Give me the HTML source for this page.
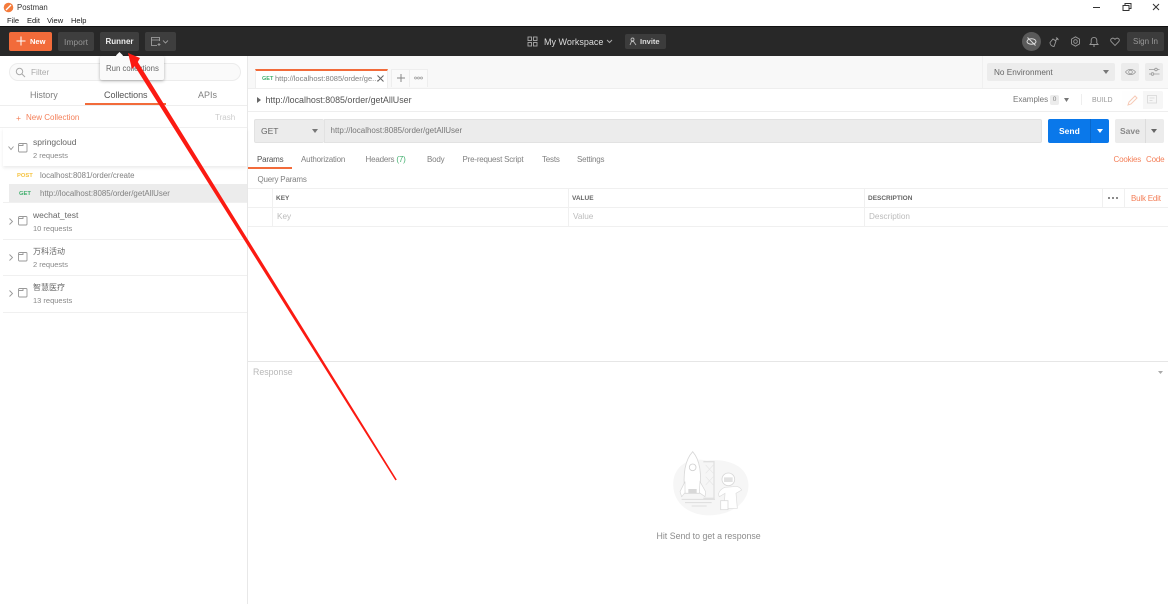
<!DOCTYPE html>
<html><head><meta charset="utf-8"><style>
html,body{margin:0;padding:0;background:#fff}
#r{position:relative;width:1168px;height:604px;overflow:hidden;background:#fff;font-family:"Liberation Sans","Noto Sans CJK SC",sans-serif;font-size:8px;color:#808080}
#r div{position:absolute;white-space:nowrap;box-sizing:border-box}
.b{border-radius:2px}
.l{background:#ececec}
.sep{background:#f0f0f0;height:1px}
.t{font-size:8px;letter-spacing:-.2px;color:#808080}
.o{font-size:8px;letter-spacing:-.2px;color:#f4805a}
svg{position:absolute;overflow:visible}
</style></head><body><div id="r">

<svg style="left:3px;top:2px" width="11" height="11" viewBox="0 0 11 11"><circle cx="5.500" cy="5.500" r="4.800" fill="#f47b3c"/><path d="M3 8L8 3" stroke="#fff" stroke-width="1.300"/></svg>
<div style="left:17px;top:2.500px;font-size:7.800px;color:#333">Postman</div>
<div style="left:7px;top:15.500px;font-size:7.500px;color:#222">File</div>
<div style="left:27px;top:15.500px;font-size:7.500px;color:#222">Edit</div>
<div style="left:47px;top:15.500px;font-size:7.500px;color:#222">View</div>
<div style="left:71px;top:15.500px;font-size:7.500px;color:#222">Help</div>
<svg style="left:1095px;top:2px" width="70" height="10" fill="none" stroke="#333"><path d="M-2 5.500H5"/><path d="M28 3.500h6v5h-6zM30 3.500v-2h6v5h-2"/><path d="M58 2l6 6M64 2l-6 6"/></svg>

<div style="left:0;top:26px;width:1168px;height:30px;background:#282828;border-top:1px solid #111"></div>
<div class="b" style="left:9px;top:32px;width:43px;height:19px;background:#f26b3a"></div>
<svg style="left:16px;top:36px" width="10" height="10" stroke="#fff" stroke-width="1"><path d="M5 0.500V9.500M0.500 5H9.500"/></svg>
<div style="left:30px;top:37px;color:#fff;font-weight:bold;font-size:7.500px">New</div>
<div class="b" style="left:58px;top:32px;width:36px;height:19px;background:#3e3e3e;color:#949494;text-align:center;line-height:20px;font-size:8.500px">Import</div>
<div class="b" style="left:100px;top:32px;width:39px;height:19px;background:#3e3e3e;color:#eee;text-align:center;line-height:20px;font-weight:bold;font-size:8px">Runner</div>
<div class="b" style="left:145px;top:32px;width:31px;height:19px;background:#3e3e3e"></div>
<svg style="left:151px;top:37px" width="20" height="10" fill="none" stroke="#aaa" stroke-width=".8"><path d="M6 8.500H.5V.5h8V4M.5 3h8M8 6v3M6.500 7.500h3"/><path d="M12 3.500l2.500 2.500 2.500-2.500" /></svg>

<svg style="left:527px;top:36px" width="11" height="11" fill="none" stroke="#aaa" stroke-width=".9"><rect x="1" y="1" width="3.500" height="3.500"/><rect x="6.500" y="1" width="3.500" height="3.500"/><rect x="1" y="6.500" width="3.500" height="3.500"/><rect x="6.500" y="6.500" width="3.500" height="3.500"/></svg>
<div style="left:544px;top:36.500px;color:#ddd;font-size:9px">My Workspace</div>
<svg style="left:606px;top:39px" width="8" height="5" fill="none" stroke="#aaa"><path d="M1 1l2.500 2.500L6 1"/></svg>
<div class="b" style="left:625px;top:34px;width:41px;height:15px;background:#3c3c3c"></div>
<svg style="left:629px;top:37px" width="8" height="9" fill="none" stroke="#bbb" stroke-width=".9"><circle cx="3.500" cy="2.500" r="1.500"/><path d="M1 8l1.500-3.500h2L7 8"/></svg>
<div style="left:640px;top:37px;color:#ddd;font-weight:bold;font-size:7.500px">Invite</div>

<div style="left:1022px;top:32px;width:19px;height:19px;border-radius:50%;background:#5a5a5a"></div>
<svg style="left:1026px;top:36px" width="11" height="11" fill="none" stroke="#ddd"><ellipse cx="5.500" cy="5.500" rx="4.500" ry="2.800"/><path d="M1.500 1.500l8 8"/></svg>
<svg style="left:1049px;top:36px" width="11" height="11" fill="none" stroke="#999" stroke-width=".9"><path d="M1 6.500A4 4 0 0 0 5 10.500L7 5 4 3zM6 5l3-3M7 1.500l2.500 2.500"/></svg>
<svg style="left:1070px;top:36px" width="11" height="11" fill="none" stroke="#999" stroke-width=".9"><path d="M5.500.8l4 2.300v4.800l-4 2.300-4-2.300V3.100z"/><circle cx="5.500" cy="5.500" r="1.800"/></svg>
<svg style="left:1089px;top:36px" width="10" height="11" fill="none" stroke="#999" stroke-width=".9"><path d="M1 8.500h8L7.800 7V4.200a2.800 2.800 0 0 0-5.600 0V7zM4 10h2"/></svg>
<svg style="left:1110px;top:37px" width="10" height="9" fill="none" stroke="#999" stroke-width=".9"><path d="M5 8.500L1 4.300C-.2 2 2.800-.2 5 2.300 7.200-.2 10.200 2 9 4.300z"/></svg>
<div class="b" style="left:1127px;top:32px;width:37px;height:19px;background:#3c3c3c;color:#999;text-align:center;line-height:20px;font-size:8px">Sign In</div>

<div style="left:0;top:56px;width:1168px;height:32px;background:#f8f8f8"></div>
<div style="left:0;top:56px;width:248px;height:548px;background:#fff;border-right:1px solid #e8e8e8"></div>

<div style="left:9px;top:63px;width:232px;height:18px;border:1px solid #ececec;border-radius:9px;background:#fafafa"></div>
<svg style="left:15px;top:67px" width="11" height="11" fill="none" stroke="#aaa"><circle cx="4.500" cy="4.500" r="3.200"/><path d="M7 7l3 3"/></svg>
<div style="left:31px;top:67.500px;color:#aaa;font-size:8.200px">Filter</div>

<div style="left:30px;top:90px;font-size:9px;letter-spacing:-.05px;color:#808080">History</div>
<div style="left:104px;top:90px;font-size:9px;letter-spacing:-.05px;color:#555">Collections</div>
<div style="left:198px;top:90px;font-size:9px;color:#808080">APIs</div>
<div style="left:85px;top:103px;width:81px;height:2px;background:#f26b3a"></div>
<div style="left:0;top:105px;width:247px;height:1px;background:#eee"></div>
<div style="left:16px;top:112.500px;color:#f4805a;font-size:8.500px">+</div>
<div style="left:26px;top:113px;color:#f4805a;font-size:8px">New Collection</div>
<div style="left:215px;top:113px;color:#ccc;font-size:8px">Trash</div>
<div style="left:0;top:127px;width:247px;height:1px;background:#f0f0f0"></div>

<div style="left:3px;top:128px;width:244px;height:38px;background:#fff;box-shadow:0 2px 3px rgba(0,0,0,.08)"></div>
<svg style="left:8px;top:146px" width="6" height="5" fill="none" stroke="#999" stroke-width=".9"><path d="M.5 .5L3 3.500 5.500 .5"/></svg>
<svg style="left:18px;top:143px" width="10" height="10" fill="none" stroke="#999" stroke-width=".9"><rect x=".5" y=".5" width="8.500" height="8.500" rx="1"/><path d="M.5 2.500h4.500V.5"/></svg>
<div style="left:33px;top:137px;font-size:8.500px;color:#666">springcloud</div>
<div style="left:33px;top:150.500px;font-size:7.500px;color:#888">2 requests</div>

<div style="left:17px;top:172.500px;font-size:5.800px;font-weight:bold;color:#f5c23e">POST</div>
<div style="left:40px;top:171px;font-size:7.800px;color:#808080">localhost:8081/order/create</div>
<div style="left:9px;top:184px;width:238px;height:18px;background:#ececec"></div>
<div style="left:19px;top:190.500px;font-size:5.800px;font-weight:bold;color:#3fae6c">GET</div>
<div style="left:40px;top:189px;font-size:7.900px;color:#808080">http://localhost:8085/order/getAllUser</div>
<div style="left:3px;top:202px;width:244px;height:1px;background:#f0f0f0"></div>

<svg style="left:9px;top:218px" width="5" height="7" fill="none" stroke="#999" stroke-width=".9"><path d="M.5 .5L3.500 3.500 .5 6.500"/></svg>
<svg style="left:18px;top:216px" width="10" height="10" fill="none" stroke="#999" stroke-width=".9"><rect x=".5" y=".5" width="8.500" height="8.500" rx="1"/><path d="M.5 2.500h4.500V.5"/></svg>
<div style="left:33px;top:210px;font-size:8.500px;color:#666">wechat_test</div>
<div style="left:33px;top:223.500px;font-size:7.500px;color:#888">10 requests</div>
<div style="left:3px;top:239px;width:244px;height:1px;background:#f0f0f0"></div>

<svg style="left:9px;top:254px" width="5" height="7" fill="none" stroke="#999" stroke-width=".9"><path d="M.5 .5L3.500 3.500 .5 6.500"/></svg>
<svg style="left:18px;top:252px" width="10" height="10" fill="none" stroke="#999" stroke-width=".9"><rect x=".5" y=".5" width="8.500" height="8.500" rx="1"/><path d="M.5 2.500h4.500V.5"/></svg>
<div style="left:33px;top:245.500px;font-size:8px;color:#666">万科活动</div>
<div style="left:33px;top:259.500px;font-size:7.500px;color:#888">2 requests</div>
<div style="left:3px;top:275px;width:244px;height:1px;background:#f0f0f0"></div>

<svg style="left:9px;top:290px" width="5" height="7" fill="none" stroke="#999" stroke-width=".9"><path d="M.5 .5L3.500 3.500 .5 6.500"/></svg>
<svg style="left:18px;top:288px" width="10" height="10" fill="none" stroke="#999" stroke-width=".9"><rect x=".5" y=".5" width="8.500" height="8.500" rx="1"/><path d="M.5 2.500h4.500V.5"/></svg>
<div style="left:33px;top:282px;font-size:8px;color:#666">智慧医疗</div>
<div style="left:33px;top:295.500px;font-size:7.500px;color:#888">13 requests</div>
<div style="left:3px;top:312px;width:244px;height:1px;background:#f0f0f0"></div>

<div style="left:100px;top:56px;width:64px;height:24px;background:#fafafa;border-radius:2px;box-shadow:0 1px 3px rgba(0,0,0,.3)"></div>
<div style="left:117px;top:53px;width:5px;height:5px;background:#fafafa;transform:rotate(45deg)"></div>
<div style="left:106px;top:63.500px;font-size:7.800px;color:#666">Run collections</div>

<div style="left:255px;top:69px;width:133px;height:19px;background:#fff;border-top:2px solid #f26b3a;border-right:1px solid #eee;border-left:1px solid #eee"></div>
<div style="left:262px;top:75.500px;font-size:5.500px;font-weight:bold;color:#3fae6c">GET</div>
<div style="left:275px;top:74px;font-size:7.500px;color:#808080">http://localhost:8085/order/ge...</div>
<svg style="left:377px;top:75px" width="7" height="7" stroke="#666"><path d="M.5 .5l6 6M6.500 .5l-6 6"/></svg>
<div style="left:391px;top:69px;width:37px;height:18px;border:1px solid #eee;background:#fafafa;border-bottom:0"></div>
<div style="left:409px;top:69px;width:1px;height:18px;background:#eee"></div>
<svg style="left:397px;top:74px" width="8" height="8" stroke="#888"><path d="M4 0v8M0 4h8"/></svg>
<svg style="left:414px;top:76px" width="10" height="4" fill="none" stroke="#999" stroke-width=".7"><circle cx="1.500" cy="2" r="1"/><circle cx="4.500" cy="2" r="1"/><circle cx="7.500" cy="2" r="1"/></svg>

<div style="left:982px;top:56px;width:1px;height:32px;background:#f0f0f0"></div>
<div class="b l" style="left:987px;top:63px;width:128px;height:18px"></div>
<div style="left:994px;top:67.500px;color:#666;font-size:8.200px">No Environment</div>
<svg style="left:1103px;top:70px" width="6" height="4" fill="#777"><path d="M0 0h6L3 4z"/></svg>
<div class="b l" style="left:1121px;top:63px;width:18px;height:18px"></div>
<svg style="left:1125px;top:68px" width="11" height="8" fill="none" stroke="#999" stroke-width=".8"><path d="M.5 4C3 .5 8 .5 10.500 4 8 7.500 3 7.500 .5 4z"/><circle cx="5.500" cy="4" r="1.800"/></svg>
<div class="b l" style="left:1145px;top:63px;width:18px;height:18px"></div>
<svg style="left:1149px;top:67px" width="11" height="10" fill="none" stroke="#999" stroke-width=".8"><path d="M0 2.500h10.500M0 7h10.500"/><circle cx="7" cy="2.500" r="1.300" fill="#ececec"/><circle cx="3.500" cy="7" r="1.300" fill="#ececec"/></svg>

<div style="left:248px;top:88px;width:920px;height:1px;background:#eee"></div>
<svg style="left:257px;top:97px" width="4" height="6" fill="#666"><path d="M0 0l4 3-4 3z"/></svg>
<div style="left:265.500px;top:94.500px;font-size:8.900px;color:#555">http://localhost:8085/order/getAllUser</div>
<div style="left:1013px;top:95px;font-size:8px;color:#777">Examples</div>
<div class="b" style="left:1050px;top:95px;width:9px;height:10px;background:#ececec;font-size:6.500px;text-align:center;line-height:10px">0</div>
<svg style="left:1064px;top:98px" width="5" height="4" fill="#777"><path d="M0 0h5L2.500 4z"/></svg>
<div style="left:1081px;top:94px;width:1px;height:11px;background:#eee"></div>
<div style="left:1092px;top:96.500px;font-size:7px;color:#999">BUILD</div>
<div class="b" style="left:1122px;top:91px;width:41px;height:18px;background:#f6f6f6"></div>
<div style="left:1122px;top:91px;width:21px;height:18px;background:#fefefe"></div>
<svg style="left:1127px;top:95px" width="11" height="11" fill="none" stroke="#f6c9b5"><path d="M1 10l1-3 6-6 2 2-6 6z"/></svg>
<svg style="left:1147px;top:95px" width="11" height="10" fill="none" stroke="#ddd"><rect x=".5" y=".5" width="9" height="7.500"/><path d="M2.500 3h5M2.500 5.500h3"/></svg>
<div style="left:248px;top:111px;width:920px;height:1px;background:#eee"></div>

<div class="b" style="left:254px;top:119px;width:70px;height:24px;background:#ececec;border:1px solid #e2e2e2;border-right:0"></div>
<div style="left:261px;top:126px;font-size:8.500px;color:#666">GET</div>
<svg style="left:312px;top:129px" width="6" height="4" fill="#777"><path d="M0 0h6L3 4z"/></svg>
<div style="left:324px;top:119px;width:718px;height:24px;background:#ececec;border:1px solid #e2e2e2;border-radius:0 2px 2px 0"></div>
<div style="left:330.500px;top:126px;font-size:8px;color:#777">http://localhost:8085/order/getAllUser</div>
<div class="b" style="left:1048px;top:119px;width:61px;height:24px;background:#0a78ea"></div>
<div style="left:1090px;top:119px;width:1px;height:24px;background:#0868cc"></div>
<div style="left:1059px;top:126px;color:#fff;font-weight:bold;font-size:8.500px">Send</div>
<svg style="left:1097px;top:129px" width="6" height="4" fill="#fff"><path d="M0 0h6L3 4z"/></svg>
<div class="b" style="left:1115px;top:119px;width:49px;height:24px;background:#ececec"></div>
<div style="left:1145px;top:119px;width:1px;height:24px;background:#dcdcdc"></div>
<div style="left:1120px;top:126px;color:#888;font-weight:bold;font-size:8.500px">Save</div>
<svg style="left:1151px;top:129px" width="6" height="4" fill="#666"><path d="M0 0h6L3 4z"/></svg>

<div class="t" style="left:257px;top:154.500px;color:#555">Params</div>
<div class="t" style="left:301px;top:154.500px">Authorization</div>
<div class="t" style="left:365.500px;top:154.500px">Headers <span style="color:#3fae6c">(7)</span></div>
<div class="t" style="left:427px;top:154.500px">Body</div>
<div class="t" style="left:462.500px;top:154.500px">Pre-request Script</div>
<div class="t" style="left:542px;top:154.500px">Tests</div>
<div class="t" style="left:577px;top:154.500px">Settings</div>
<div style="left:248px;top:167px;width:44px;height:2px;background:#f26b3a"></div>
<div class="o" style="left:1113.500px;top:154.500px">Cookies</div>
<div class="o" style="left:1146px;top:154.500px">Code</div>

<div class="t" style="left:257.500px;top:174.500px">Query Params</div>
<div class="sep" style="left:248px;top:188px;width:920px"></div>
<div class="sep" style="left:248px;top:207px;width:920px"></div>
<div class="sep" style="left:248px;top:226px;width:920px"></div>
<div style="left:272px;top:188px;width:1px;height:38px;background:#f0f0f0"></div>
<div style="left:568px;top:188px;width:1px;height:38px;background:#f0f0f0"></div>
<div style="left:864px;top:188px;width:1px;height:38px;background:#f0f0f0"></div>
<div style="left:1102px;top:188px;width:1px;height:19px;background:#f0f0f0"></div>
<div style="left:1124px;top:188px;width:1px;height:19px;background:#f0f0f0"></div>
<div style="left:276px;top:195px;font-size:6.500px;font-weight:bold;color:#666">KEY</div>
<div style="left:572px;top:195px;font-size:6.500px;font-weight:bold;color:#666">VALUE</div>
<div style="left:868px;top:195px;font-size:6.500px;font-weight:bold;color:#666">DESCRIPTION</div>
<div style="left:277px;top:212px;color:#bbb;font-size:8.200px">Key</div>
<div style="left:573px;top:212px;color:#bbb;font-size:8.200px">Value</div>
<div style="left:869px;top:212px;color:#bbb;font-size:8.200px">Description</div>
<svg style="left:1108px;top:197px" width="10" height="3" fill="#666"><circle cx="1" cy="1" r="1"/><circle cx="5" cy="1" r="1"/><circle cx="9" cy="1" r="1"/></svg>
<div class="o" style="left:1131px;top:193.500px">Bulk Edit</div>

<div style="left:248px;top:361px;width:920px;height:1px;background:#e6e6e6"></div>
<div style="left:253px;top:367px;font-size:8.800px;color:#b8b8b8">Response</div>
<svg style="left:1158px;top:371px" width="5" height="3" fill="#aaa"><path d="M0 0h5L2.500 3z"/></svg>

<svg style="left:640px;top:440px" width="140" height="110" viewBox="0 0 420 330" fill="none">
<path d="M100 125C105 75 150 50 200 62 250 55 320 70 325 130 330 190 270 225 210 226 150 228 95 190 100 125z" fill="#f6f6f6"/>
<path d="M190 65H222V175H190" stroke="#e0e0e0" stroke-width="4"/>
<path d="M197 75L220 100M220 75L197 100M197 110L220 135M220 110L197 135" stroke="#e6e6e6" stroke-width="2"/>
<path d="M158 35C135 60 128 105 135 160H178C186 105 180 60 158 35z" fill="#fff" stroke="#d8d8d8" stroke-width="2.500"/>
<circle cx="158" cy="82" r="10" fill="#fff" stroke="#d0d0d0" stroke-width="2.500"/>
<path d="M135 125L120 155 125 170 135 158zM180 125L197 155 195 170 178 158z" fill="#fff" stroke="#d8d8d8" stroke-width="2"/>
<path d="M145 147h25v12h-25z" fill="#d8d8d8"/>
<path d="M125 178H225M135 188H215M155 198H200" stroke="#ddd" stroke-width="3"/>
<circle cx="265" cy="118" r="19" fill="#fff" stroke="#d8d8d8" stroke-width="2.500"/>
<path d="M252 112h26v14h-26z" fill="#e2e2e2"/>
<path d="M255 142C240 148 232 160 238 170L255 160 252 205H292L288 160 305 150C300 140 290 138 280 140z" fill="#fff" stroke="#dcdcdc" stroke-width="2"/>
<rect x="242" y="182" width="22" height="27" fill="#fff" stroke="#dcdcdc" stroke-width="2.500"/>
</svg>
<div style="left:656.500px;top:530.500px;font-size:8.800px;color:#8c8c8c">Hit Send to get a response</div>

<svg style="left:0;top:0" width="1168" height="604"><path d="M128 53L140 58 137.800 62 396.800 479.600 395.400 480.400 134.800 66.200 132 69z" fill="#fb1a12"/></svg>
</div></body></html>
